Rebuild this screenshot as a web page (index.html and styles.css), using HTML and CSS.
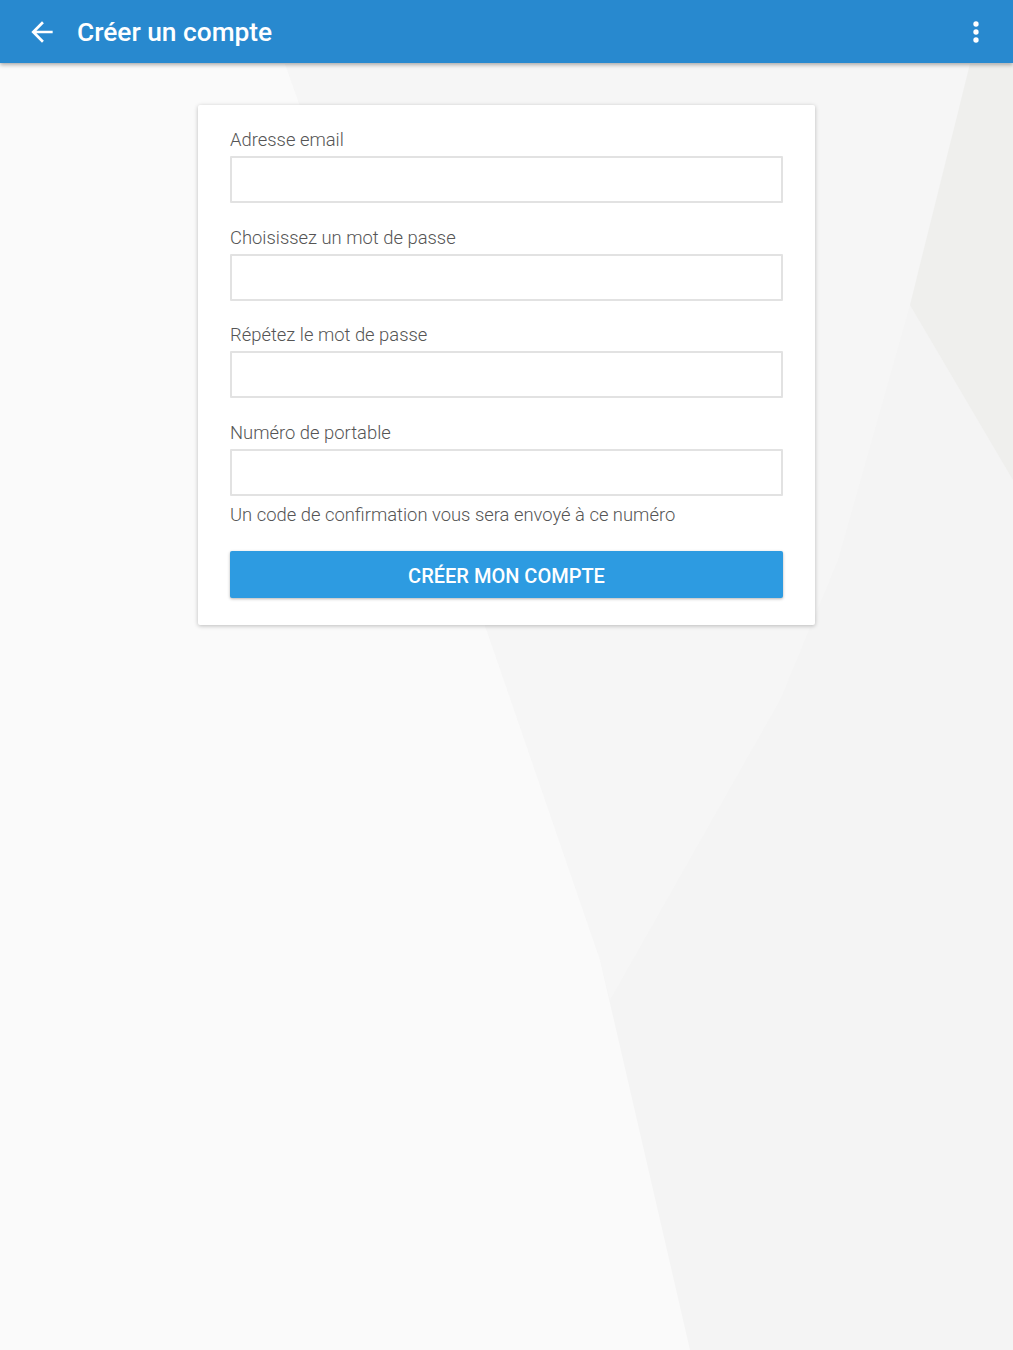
FILE: index.html
```html
<!DOCTYPE html>
<html lang="fr">
<head>
    <meta charset="UTF-8">
    <title>Créer un compte</title>
    <link rel="stylesheet" href="styles.css">
</head>
<body>
<svg class="backdrop" viewBox="0 0 1013 1350" preserveAspectRatio="none">
    <rect x="0" y="0" width="1013" height="1350" fill="#f4f4f4"/>
    <polygon points="285,64 970,64 910,305 838,560 780,700 610,1000 600,960 490,640" fill="#f6f6f6"/>
    <polygon points="0,64 285,64 490,640 600,960 690,1350 0,1350" fill="#fafafa"/>
    <polygon points="970,64 1013,64 1013,480 910,305" fill="#efefed"/>
</svg>

<header class="topbar">
    <button class="icon-btn" aria-label="Retour">
        <svg viewBox="0 0 24 24" width="32" height="32"><path d="M20 11H7.83l5.59-5.59L12 4l-8 8 8 8 1.41-1.41L7.83 13H20v-2z" fill="#fff"/></svg>
    </button>
    <h1 class="title">Créer un compte</h1>
    <button class="icon-btn menu" aria-label="Menu">
        <svg viewBox="0 0 24 24" width="32" height="32"><circle cx="12" cy="6" r="2" fill="#fff"/><circle cx="12" cy="12" r="2" fill="#fff"/><circle cx="12" cy="18" r="2" fill="#fff"/></svg>
    </button>
</header>

<main class="page">
    <form class="card">
        <label class="field">
            <span>Adresse email</span>
            <input type="email">
        </label>
        <label class="field">
            <span>Choisissez un mot de passe</span>
            <input type="password">
        </label>
        <label class="field">
            <span>Répétez le mot de passe</span>
            <input type="password">
        </label>
        <label class="field last">
            <span>Numéro de portable</span>
            <input type="tel">
        </label>
        <p class="hint">Un code de confirmation vous sera envoyé à ce numéro</p>
        <button type="submit" class="submit">Créer mon compte</button>
    </form>
</main>
</body>
</html>
```

FILE: styles.css
```css
body {
    margin: 0;
    height: 1350px;
    position: relative;
    font-family: Roboto, "Noto Sans", Arial, sans-serif;
    background: #f4f4f4;
    overflow: hidden;
}
.backdrop {
    position: absolute;
    top: 0;
    left: 0;
    width: 1013px;
    height: 1350px;
    z-index: 0;
}
.topbar {
    position: relative;
    z-index: 2;
    display: flex;
    align-items: center;
    height: 63px;
    padding: 0 21px 0 26px;
    background: #2889cf;
    box-shadow: 0 2px 4px rgba(0, 0, 0, 0.3);
}
.icon-btn {
    display: flex;
    border: 0;
    padding: 0;
    background: none;
    width: 32px;
    height: 32px;
}
.title {
    flex: 1;
    margin: 0 0 0 19px;
    color: #fff;
    font-size: 26.3px;
    font-weight: 500;
    line-height: 32px;
}
.page {
    position: relative;
    z-index: 1;
    padding-top: 42px;
}
.card {
    width: 617px;
    box-sizing: border-box;
    margin: 0 auto;
    padding: 23px 32px 27px;
    background: #fff;
    border-radius: 2px;
    box-shadow: 0 1px 4px rgba(0, 0, 0, 0.25);
}
.field {
    display: block;
    margin-bottom: 22.5px;
}
.field.last {
    margin-bottom: 0;
}
.field span {
    display: block;
    font-size: 18.4px;
    font-weight: 300;
    line-height: 24px;
    color: #555;
    margin-bottom: 4px;
}
.field input {
    display: block;
    width: 100%;
    height: 47px;
    box-sizing: border-box;
    border: 2px solid #e2e2e2;
    border-radius: 1px;
    background: #fff;
    font-size: 18px;
}
.hint {
    margin: 7px 0 24px;
    font-size: 18.4px;
    font-weight: 300;
    line-height: 24px;
    color: #555;
}
.submit {
    display: block;
    width: 100%;
    height: 47px;
    padding: 4px 0 0;
    border: 0;
    border-radius: 2px;
    background: #2d9be1;
    color: #fff;
    font-family: Roboto, Arial, sans-serif;
    font-size: 20px;
    font-weight: 500;
    text-transform: uppercase;
    box-shadow: 0 1px 3px rgba(0, 0, 0, 0.3);
}
```
